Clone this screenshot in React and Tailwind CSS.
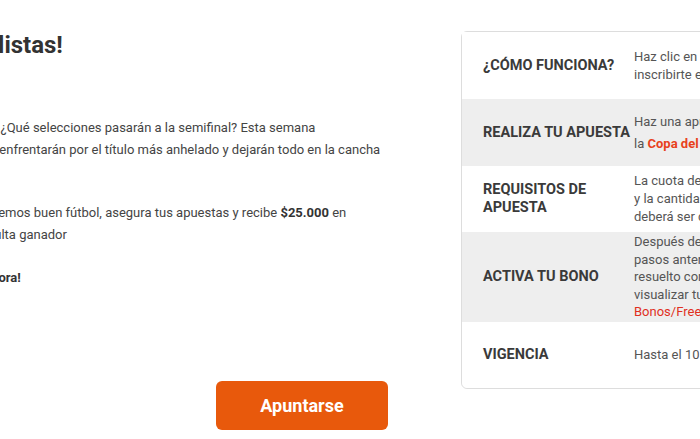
import React from 'react';

// Promo page, scrolled so the left column is partly out of view
const ROWS = [
  {
    label: ['¿CÓMO FUNCIONA?'],
    value: [
      'Haz clic en el botón "Apuntarse" para',
      'inscribirte en la promoción.',
    ],
    tone: 'bg-white',
    height: 'h-[67px]',
    leading: 'leading-[18px]',
  },
  {
    label: ['REALIZA TU APUESTA'],
    value: [
      'Haz una apuesta en un partido de cuartos de final de',
      <>
        la <span className="font-bold text-[#e8411c]">Copa del Mundo</span>
      </>,
    ],
    tone: 'bg-[#eeeeee]',
    height: 'h-[67px]',
    leading: 'leading-[22px]',
  },
  {
    label: ['REQUISITOS DE', 'APUESTA'],
    value: [
      'La cuota debe ser de mínimo 1.50',
      'y la cantidad mínima de $5.000',
      'deberá ser de tu saldo real.',
    ],
    tone: 'bg-white',
    height: 'h-[66px]',
    leading: 'leading-[18px]',
  },
  {
    label: ['ACTIVA TU BONO'],
    value: [
      'Después de completar los',
      'pasos anteriores y si tu apuesta es',
      'resuelto como ganadora, podrás',
      'visualizar tu bono en la sección',
      <span className="text-[#e0301e]">Bonos/Freebets</span>,
    ],
    tone: 'bg-[#eeeeee]',
    height: 'h-[90px]',
    leading: 'leading-[17.5px]',
  },
  {
    label: ['VIGENCIA'],
    value: ['Hasta el 10 de diciembre de 2022'],
    tone: 'bg-white',
    height: 'h-[66px]',
    leading: 'leading-[18px]',
  },
];

function InfoRow({ row, last }) {
  return (
    <div
      className={`grid grid-cols-[172px_1fr] items-center ${row.tone} ${row.height} ${
        last ? 'rounded-b-[6px]' : ''
      }`}
    >
      <div className="pl-[21px] text-[14.5px] font-bold leading-[18px] text-[#3a3a3a]">
        {row.label.map((l, i) => (
          <div key={i}>{l}</div>
        ))}
      </div>
      <div className={`whitespace-nowrap text-[13px] text-[#555555] ${row.leading}`}>
        {row.value.map((v, i) => (
          <div key={i}>{v}</div>
        ))}
      </div>
    </div>
  );
}

export default function App() {
  return (
    <div
      className="h-[439px] w-[700px] overflow-hidden bg-white"
      style={{ fontFamily: 'Roboto, "Liberation Sans", sans-serif' }}
    >
      <div className="ml-[-170px] flex items-start gap-[31px]">
        {/* Left column — copy + CTA */}
        <div className="flex w-[600px] shrink-0 flex-col pt-[29px] text-[#444444]">
          <h1 className="whitespace-nowrap text-[24px] font-bold leading-[32px] text-[#333333]">
            ¡Los cuarto finalistas!
          </h1>

          <p className="mt-[56px] whitespace-nowrap text-[13px] leading-[22px]">
            ¡Estamos en cuartos de final! ¿Qué selecciones pasarán a la semifinal? Esta semana
            <br />
            las 8 mejores selecciones se enfrentarán por el título más anhelado y dejarán todo en la cancha
          </p>

          <p className="mt-[41px] whitespace-nowrap text-[13px] leading-[22px]">
            Con los cuatro partidos tendremos buen fútbol, asegura tus apuestas y recibe{' '}
            <span className="font-bold text-[#333333]">$25.000</span> en
            <br />
            Freebets si tu pronóstico resulta ganador
          </p>

          <p className="mt-[21px] whitespace-nowrap text-[13px] font-bold leading-[22px] text-[#333333]">
            ¡No esperes más, apuesta ahora!
          </p>

          <div className="mt-[92px] flex pl-[386px]">
            <button className="h-[49px] w-[172px] rounded-[6px] bg-[#e8590c] text-[18px] font-bold text-white">
              Apuntarse
            </button>
          </div>
        </div>

        {/* Right column — how it works card */}
        <div className="mt-[31px] w-[480px] shrink-0 rounded-[6px] border border-[#dddddd]">
          {ROWS.map((row, i) => (
            <InfoRow key={i} row={row} last={i === ROWS.length - 1} />
          ))}
        </div>
      </div>
    </div>
  );
}
